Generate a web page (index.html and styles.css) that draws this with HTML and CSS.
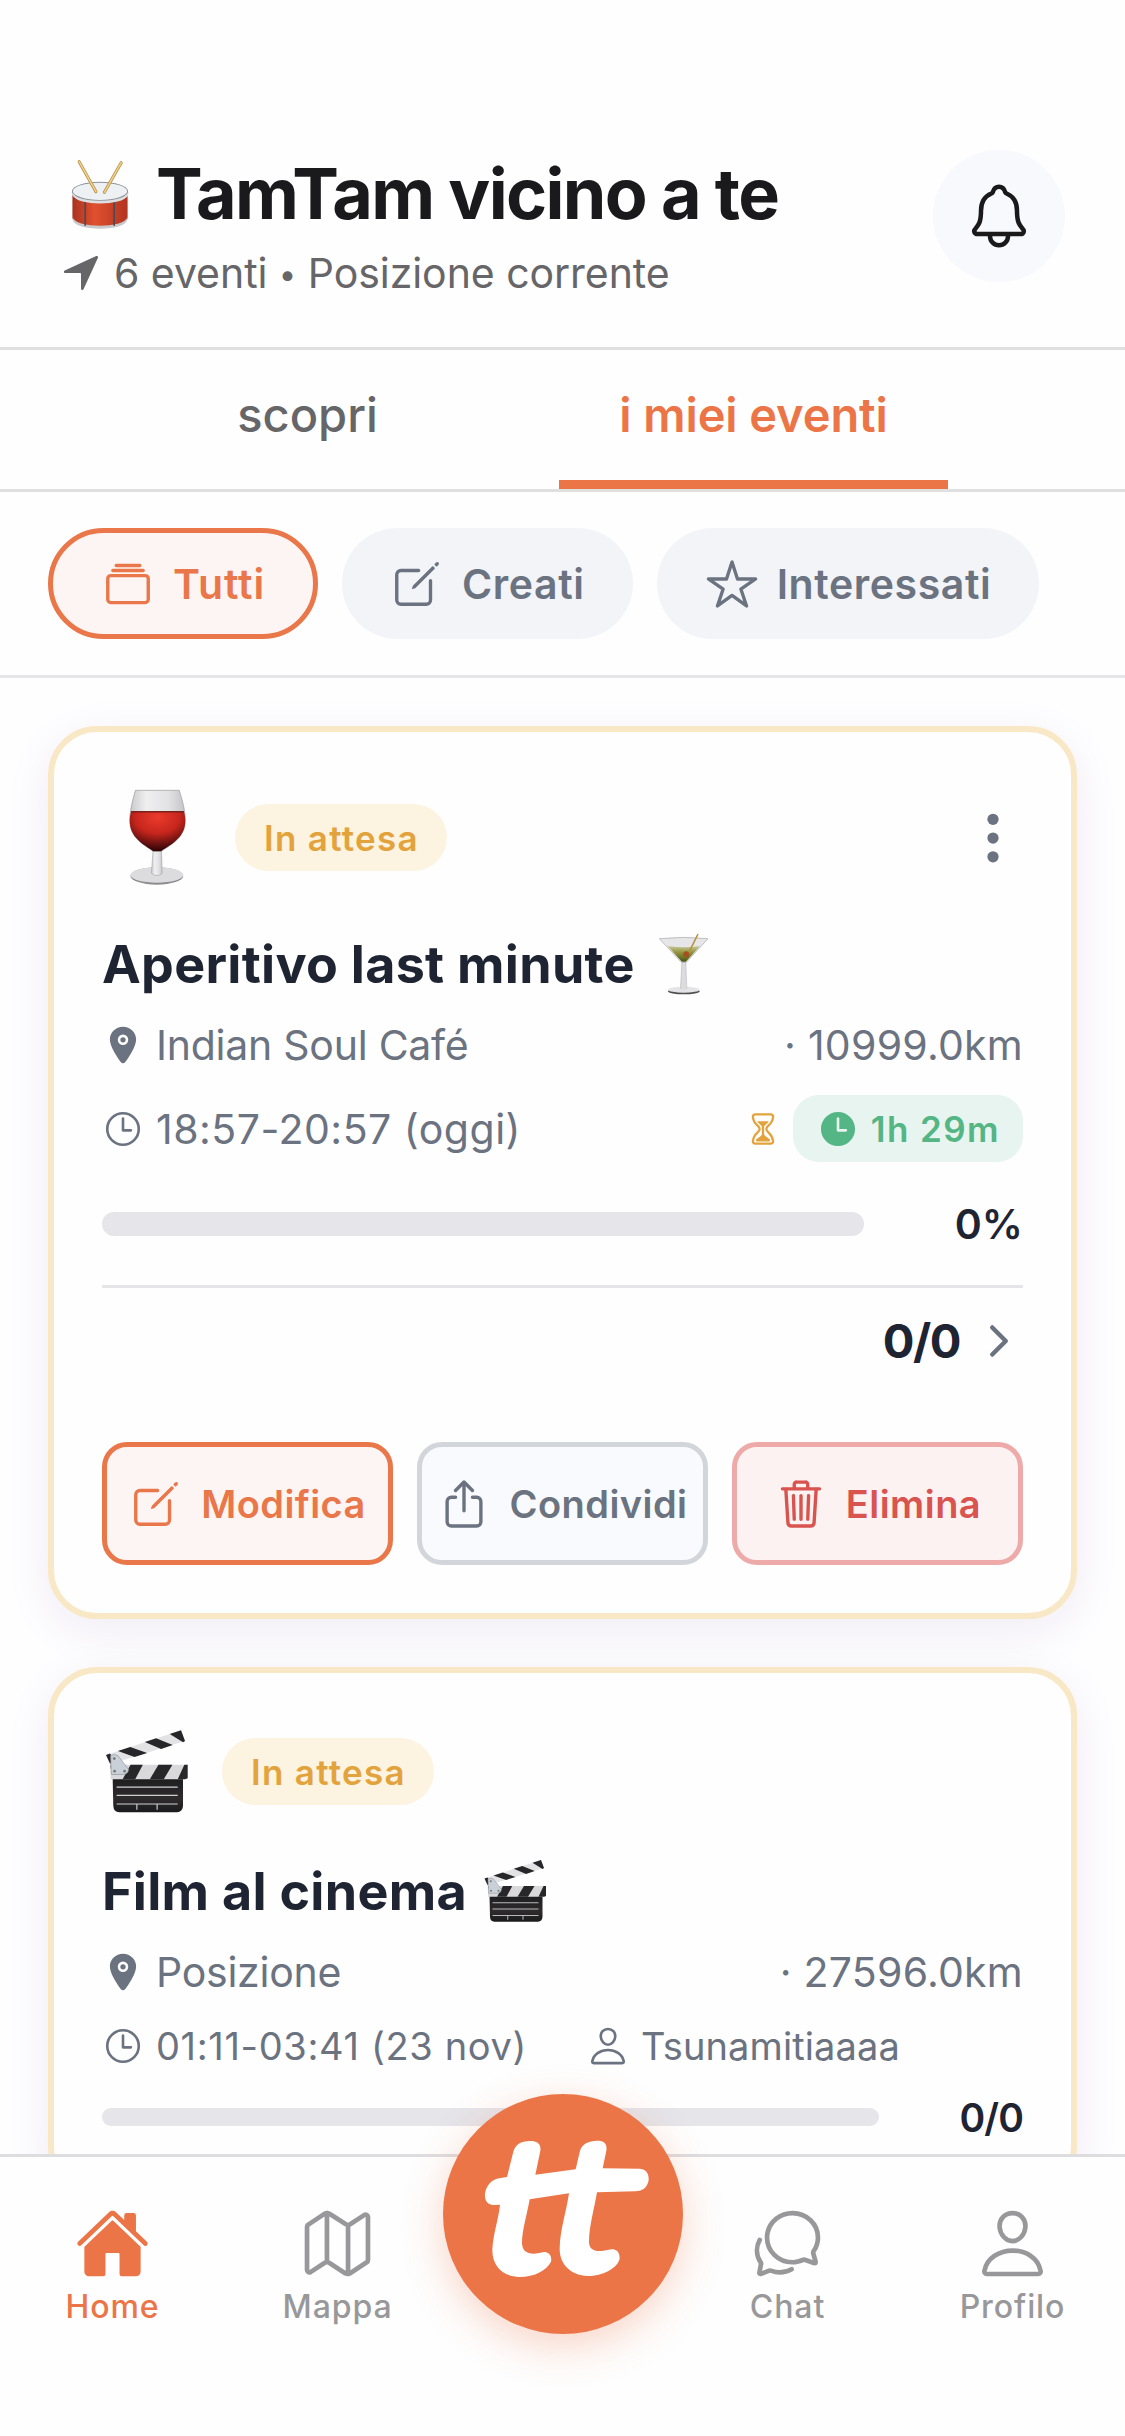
FILE: index.html
```html
<!DOCTYPE html>
<html lang="it">
<head>
<meta charset="utf-8">
<title>TamTam</title>
<link rel="stylesheet" href="styles.css">
</head>
<body>
<svg class="defs" aria-hidden="true">
  <symbol id="create" viewBox="0 0 512 512">
    <path class="line" d="M384 224v184a40 40 0 01-40 40H104a40 40 0 01-40-40V168a40 40 0 0140-40h167.48"/>
    <path d="M459.94 53.25a16.06 16.06 0 00-23.22-.56L424.35 65a8 8 0 000 11.31l11.34 11.32a8 8 0 0011.34 0l12.06-12c6.1-6.09 6.67-16.01.85-22.38zM399.34 90L218.82 270.2a9 9 0 00-2.31 3.93L208.16 299a3.91 3.91 0 004.86 4.86l24.85-8.35a9 9 0 003.93-2.31L422 112.66a9 9 0 000-12.66l-9.95-10a9 9 0 00-12.71 0z"/>
  </symbol>
  <symbol id="location" viewBox="0 0 512 512">
    <circle cx="256" cy="192" r="32"/>
    <path d="M256 32c-88.22 0-160 68.65-160 153 0 40.17 18.31 93.59 54.42 158.78 29 52.34 62.55 99.67 80 123.22a31.75 31.75 0 0051.22 0c17.42-23.55 51-70.88 80-123.22C397.69 278.61 416 225.19 416 185c0-84.35-71.78-153-160-153zm0 224a64 64 0 1164-64 64.07 64.07 0 01-64 64z"/>
  </symbol>
  <symbol id="clock" viewBox="0 0 512 512">
    <circle class="line" cx="256" cy="256" r="192"/>
    <path class="line" d="M256 128v144h96"/>
  </symbol>
  <symbol id="person" viewBox="0 0 512 512">
    <path class="line" d="M344 144c-3.92 52.87-44 96-88 96s-84.15-43.12-88-96c-4-55 35-96 88-96s92 42 88 96z"/>
    <path class="line" d="M256 304c-87 0-175.3 48-191.64 138.6C62.39 453.52 68.57 464 80 464h352c11.44 0 17.62-10.48 15.65-21.4C431.3 352 343 304 256 304z"/>
  </symbol>
  <linearGradient id="slate" x1="0" y1="0" x2="0" y2="1"><stop offset="0" stop-color="#1c1c1e"/><stop offset=".6" stop-color="#2e2b2c"/><stop offset="1" stop-color="#1a1a1c"/></linearGradient>
  <linearGradient id="drumBody"><stop offset="0" stop-color="#a93220"/><stop offset=".4" stop-color="#e0502f"/><stop offset="1" stop-color="#b23420"/></linearGradient>
  <radialGradient id="wine" cx=".5" cy=".15" r=".8"><stop offset="0" stop-color="#ea3b2c"/><stop offset=".5" stop-color="#c7261d"/><stop offset="1" stop-color="#3a0709"/></radialGradient>
  <linearGradient id="glass"><stop offset="0" stop-color="#c9c8ca"/><stop offset=".3" stop-color="#efeff0"/><stop offset=".7" stop-color="#e2e2e4"/><stop offset="1" stop-color="#c4c3c6"/></linearGradient>
  <linearGradient id="martini" x1="0" y1="0" x2="0" y2="1"><stop offset="0" stop-color="#c9c99a"/><stop offset=".4" stop-color="#94953f"/><stop offset="1" stop-color="#4a5312"/></linearGradient>
  <symbol id="clapper" viewBox="45 30 250 256">
    <path d="M68 174H280V262Q278 280 262 281H88Q71 280 70 262Z" fill="url(#slate)"/>
    <path d="M62 138H294V176Q292 181 286 181H62Z" fill="#d9d9db"/>
    <path d="M62 138H72L62 150ZM122 138H159L136 181H98ZM206 138H248L222 181H180ZM284 138H294V178L286 181H264Z" fill="#27272a"/>
    <path d="M48 108L274 34L286 66L60 136Z" fill="#e3e3e5"/>
    <path d="M84 96L121 84L172 102L134 114ZM165 69L199 58L249 78L214 90ZM240 45L274 34L286 66L280 70ZM48 108L60 104L78 130L60 134Z" fill="#27272a"/>
    <path d="M62 110Q72 104 84 110L116 152Q114 166 100 167H64Z" fill="#c9d0d8" stroke="#8f959c" stroke-width="2"/>
    <circle cx="73" cy="119" r="4" fill="#777"/><circle cx="74" cy="157" r="4" fill="#777"/><circle cx="104" cy="157" r="4" fill="#777"/>
    <path d="M80 205H264M80 230H264M80 256H264M141 256V273M202 256V273" fill="none" stroke="#cfcfd1" stroke-width="3.5"/>
  </symbol>
</svg>
<div class="app">
  <header class="header">
    <div class="heading">
      <h1 class="title">
        <svg class="drum" viewBox="62 52 172 208">
          <path d="M66 152V228C72 248 110 256 148 256S224 248 230 228V152Z" fill="url(#drumBody)"/>
          <path d="M66 224C72 242 110 250 148 250S224 242 230 224V232C224 252 190 259 148 259S72 252 66 232Z" fill="#c9c9cc"/>
          <path d="M104 170V250M190 170V250" stroke="#4b4b50" stroke-width="5"/>
          <ellipse cx="148" cy="152" rx="84" ry="29" fill="#c5cacf"/>
          <ellipse cx="148" cy="148" rx="82" ry="27" fill="#eef1f4" stroke="#8d9196" stroke-width="3"/>
          <path d="M66 152V160C76 178 110 184 148 184S222 178 232 160V152C220 170 190 176 148 176S76 170 66 152Z" fill="#dddfe2"/>
          <path d="M86 60L136 149M211 63L161 151" stroke="#b98a3e" stroke-width="9" stroke-linecap="round"/>
          <path d="M86 60L136 149M211 63L161 151" stroke="#ecd08c" stroke-width="5" stroke-linecap="round"/>
        </svg>
        <span class="t">TamTam vicino a te</span>
      </h1>
      <p class="subtitle">
        <svg class="i42" viewBox="0 0 512 512"><path d="M272 464a16 16 0 01-16-16.42V264.13a8 8 0 00-8-8H64.41a16.31 16.31 0 01-15.49-10.65 16 16 0 018.41-19.87l384-176.15a16 16 0 0121.22 21.19l-176 384A16 16 0 01272 464z"/></svg>
        <span class="t">6 eventi <span class="dot">•</span> Posizione corrente</span>
      </p>
    </div>
    <button class="bell">
      <svg class="i72" viewBox="0 0 512 512"><path class="line" d="M427.68 351.43C402 320 383.87 304 383.87 217.35 383.87 138 343.35 109.73 310 96c-4.43-1.82-8.6-6-9.95-10.55C294.2 65.54 277.8 48 256 48s-38.21 17.55-44 37.47c-1.35 4.6-5.52 8.71-9.95 10.53-33.39 13.75-73.87 41.92-73.87 121.35C128.13 304 110 320 84.32 351.43 73.68 364.45 83 384 101.61 384h308.88c18.51 0 27.77-19.61 17.19-32.57zM320 384v16a64 64 0 01-128 0v-16"/></svg>
    </button>
  </header>

  <nav class="tabs">
    <a class="tab"><span class="t">scopri</span></a>
    <a class="tab active"><span class="t">i miei eventi</span></a>
  </nav>

  <div class="filters">
    <button class="chip selected">
      <svg class="i54" viewBox="0 0 512 512"><rect class="line" x="64" y="176" width="384" height="256" rx="28.87"/><path class="line" d="M144 80h224M112 128h288"/></svg>
      <span class="t">Tutti</span>
    </button>
    <button class="chip">
      <svg class="i54"><use href="#create"/></svg>
      <span class="t">Creati</span>
    </button>
    <button class="chip">
      <svg class="i54" viewBox="0 0 512 512"><path class="line" d="M480 208H308L256 48l-52 160H32l140 96-54 160 138-100 138 100-54-160z"/></svg>
      <span class="t">Interessati</span>
    </button>
  </div>

  <main class="list">
    <article class="card">
      <div class="card-head tall">
        <svg class="wine" viewBox="88 60 170 290">
          <ellipse cx="171" cy="320" rx="79" ry="26" fill="#8d8b8e"/>
          <ellipse cx="171" cy="317" rx="79" ry="23" fill="#dcdbdd"/>
          <path d="M160 240H185L187 312Q172 326 155 312Z" fill="url(#glass)" stroke="#99979a" stroke-width="1.5"/>
          <path d="M107 64H238C248 96 256 125 256 155C256 205 215 225 184 246H160C130 225 90 205 90 155C90 125 98 96 107 64Z" fill="url(#glass)" stroke="#99979a" stroke-width="2"/>
          <path d="M94 127H252C255 138 256 146 256 155C256 205 215 225 184 246H160C130 225 90 205 90 155C90 146 91 138 94 127Z" fill="url(#wine)"/>
          <path d="M94 128H252" stroke="#7a211d" stroke-width="4"/>
        </svg>
        <span class="badge"><span class="t">In attesa</span></span>
        <svg class="i60 more" viewBox="0 0 512 512"><circle cx="256" cy="96" r="48"/><circle cx="256" cy="256" r="48"/><circle cx="256" cy="416" r="48"/></svg>
      </div>
      <h2 class="name">
        <span class="t">Aperitivo last minute</span>
        <svg class="cocktail" viewBox="56 40 148 184">
          <ellipse cx="131" cy="213" rx="48" ry="9" fill="#4f4f52"/>
          <ellipse cx="131" cy="208" rx="47" ry="9" fill="#e4e4e6"/>
          <path d="M125 124H137L139 206Q131 212 121 206Z" fill="#dcdcdf"/>
          <path d="M125 126L121 204M137 126L140 204" fill="none" stroke="#aaaaad" stroke-width="1.5"/>
          <path d="M57 54Q131 46 204 54L138 126H124Z" fill="#e6e6e8" stroke="#a9a9ac" stroke-width="2"/>
          <path d="M82 76Q131 84 180 76L137 124H125Z" fill="url(#martini)"/>
          <path d="M173 42L144 100" stroke="#b7913c" stroke-width="4.5" stroke-linecap="round"/>
          <circle cx="138" cy="101" r="9" fill="#a3521f"/>
        </svg>
      </h2>
      <div class="row place">
        <svg class="i42"><use href="#location"/></svg>
        <span class="t">Indian Soul Café</span>
        <span class="t km">· 10999.0km</span>
      </div>
      <div class="row when">
        <svg class="i42"><use href="#clock"/></svg>
        <span class="t">18:57-20:57 (oggi)</span>
        <svg class="hourglass" viewBox="0 0 512 512"><path class="line" d="M145.61 464h220.78c19.8 0 35.55-16.29 33.42-35.06C386.06 308 304 310 304 256s83.11-51 95.8-172.94c2-18.78-13.61-35.06-33.41-35.06H145.61c-19.8 0-35.37 16.28-33.41 35.06C124.89 205 208 201 208 256s-82.06 52-95.8 172.94c-2.14 18.77 13.61 35.06 33.41 35.06z"/><path d="M343.3 432H169.13c-15.6 0-20-18-9.06-29.16C186.55 376 240 356.78 240 326V224c0-19.85-38-35-61.51-67.2-3.88-5.31-3.49-12.8 6.37-12.8h142.73c8.41 0 10.23 7.43 6.4 12.75C310.82 189 272 204.05 272 224v102c0 30.53 55.71 47 80.4 76.87 9.95 12.04 6.47 29.13-9.1 29.13z"/></svg>
        <span class="remaining">
          <svg class="i42" viewBox="0 0 512 512"><path d="M256 48C141.13 48 48 141.13 48 256s93.13 208 208 208 208-93.13 208-208S370.87 48 256 48zm96 240h-96a16 16 0 01-16-16V128a16 16 0 0132 0v128h80a16 16 0 010 32z"/></svg>
          <span class="t">1h 29m</span>
        </span>
      </div>
      <div class="progress">
        <div class="bar"></div>
        <span class="t">0%</span>
      </div>
      <div class="people">
        <span class="t">0/0</span>
        <svg class="i48" viewBox="0 0 512 512"><path class="line thick" d="M184 112l144 144-144 144"/></svg>
      </div>
      <div class="actions">
        <button class="action edit">
          <svg class="i54"><use href="#create"/></svg>
          <span class="t">Modifica</span>
        </button>
        <button class="action share">
          <svg class="i54" viewBox="0 0 512 512"><path class="line" d="M336 192h40a40 40 0 0140 40v192a40 40 0 01-40 40H136a40 40 0 01-40-40V232a40 40 0 0140-40h40M336 128l-80-80-80 80M256 321V48"/></svg>
          <span class="t">Condividi</span>
        </button>
        <button class="action delete">
          <svg class="i54" viewBox="0 0 512 512"><path class="line" d="M112 112l20 320c.95 18.49 14.4 32 32 32h184c17.67 0 30.87-13.51 32-32l20-320M80 112h352M192 112V72h0a23.93 23.93 0 0124-24h80a23.93 23.93 0 0124 24h0v40M256 176v224M184 176l8 224M328 176l-8 224"/></svg>
          <span class="t">Elimina</span>
        </button>
      </div>
    </article>

    <article class="card">
      <div class="card-head">
        <svg class="clapper"><use href="#clapper"/></svg>
        <span class="badge"><span class="t">In attesa</span></span>
      </div>
      <h2 class="name">
        <span class="t">Film al cinema</span>
        <svg class="clapper-sm"><use href="#clapper"/></svg>
      </h2>
      <div class="row place">
        <svg class="i42"><use href="#location"/></svg>
        <span class="t">Posizione</span>
        <span class="t km">· 27596.0km</span>
      </div>
      <div class="row meta">
        <svg class="i42"><use href="#clock"/></svg>
        <span class="t">01:11-03:41 (23 nov)</span>
        <svg class="i42 author"><use href="#person"/></svg>
        <span class="t author-name">Tsunamitiaaaa</span>
      </div>
      <div class="progress slim">
        <div class="bar"></div>
        <span class="t">0/0</span>
      </div>
    </article>
  </main>

  <nav class="bottom">
    <a class="item current">
      <svg class="i75" viewBox="0 0 512 512"><path d="M261.56 101.28a8 8 0 00-11.06 0L66.4 277.15a8 8 0 00-2.47 5.79L63.9 448a32 32 0 0032 32H192a16 16 0 0016-16V328a8 8 0 018-8h80a8 8 0 018 8v136a16 16 0 0016 16h96.06a32 32 0 0032-32V282.94a8 8 0 00-2.47-5.79z"/><path d="M490.91 244.15l-74.8-71.56V64a16 16 0 00-16-16h-48a16 16 0 00-16 16v32l-57.92-55.38C272.77 35.14 264.71 32 256 32c-8.68 0-16.72 3.14-22.14 8.63l-212.7 203.5c-6.22 6-7 15.87-1.34 22.37A16 16 0 0043 267.56L250.5 69.28a8 8 0 0111.06 0l207.52 198.28a16 16 0 0022.59-.44c6.14-6.36 5.63-16.86-.76-22.97z"/></svg>
      <span class="t">Home</span>
    </a>
    <a class="item">
      <svg class="i75" viewBox="0 0 512 512"><path class="line" d="M313.27 124.64L198.73 51.36a32 32 0 00-29.28.35L56.51 127.49A16 16 0 0048 141.63v295.8a16 16 0 0023.49 14.14l97.82-63.79a32 32 0 0129.5-.24l111.86 73a32 32 0 0029.27-.11l115.43-75.94a16 16 0 008.63-14.2V74.57a16 16 0 00-23.49-14.14l-98 63.86a32 32 0 01-29.24.35zM328 128v336M184 48v336"/></svg>
      <span class="t">Mappa</span>
    </a>
    <button class="fab">
      <svg viewBox="39 42 720 720"><path d="M250 215C256 195 272 183 300 183C322 183 334 192 331 212L316 284L437 268L450 212C456 192 475 182 502 182C524 182 532 192 529 212L518 265L628 266C650 267 657 282 656 300C653 320 640 334 615 334L501 337C494 380 477 440 477 485C477 505 490 515 515 513C530 511 540 507 550 508C565 511 571 524 568 540C558 566 520 588 472 588C425 586 388 555 389 505C390 450 408 400 417 340L299 358C290 410 276 450 276 490C277 510 287 521 312 521C328 520 335 516 346 516C360 519 366 530 363 545C350 570 315 591 268 591C220 590 186 560 187 508C190 460 206 415 210 374L190 375C170 374 163 358 165 340C170 312 188 297 212 294L231 291Z"/></svg>
    </button>
    <a class="item">
      <svg class="i75" viewBox="0 0 512 512"><path class="line" d="M431 320.6c-1-3.6 1.2-8.6 3.3-12.2a33.68 33.68 0 012.1-3.1A162 162 0 00464 215c.3-92.2-77.5-167-173.7-167-83.9 0-153.9 57.1-170.3 132.9a160.7 160.7 0 00-3.7 34.2c0 92.3 74.8 169.1 171 169.1 15.3 0 35.9-4.6 47.2-7.7s22.5-7.2 25.4-8.3a26.44 26.44 0 019.3-1.7 26 26 0 0110.1 2l56.7 20.1a13.52 13.52 0 003.9 1 8 8 0 008-8 12.85 12.85 0 00-.5-2.7z"/><path class="line" d="M66.46 232a146.23 146.23 0 006.39 152.67c2.31 3.49 3.61 6.19 3.21 8s-11.93 61.87-11.93 61.87a8 8 0 002.71 7.68A8.17 8.17 0 0072 464a7.26 7.26 0 002.91-.6l56.21-22a15.7 15.7 0 0112 .2c18.94 7.38 39.88 12 60.83 12A159.21 159.21 0 00284 432.11"/></svg>
      <span class="t">Chat</span>
    </a>
    <a class="item">
      <svg class="i75"><use href="#person"/></svg>
      <span class="t">Profilo</span>
    </a>
  </nav>
</div>
</body>
</html>
```
FILE: styles.css
```css
* { box-sizing: border-box; margin: 0; }
body { font-family: Inter, "Liberation Sans", sans-serif; background: #fefefe; color: #1c1c1e; }
button { font: inherit; border: 0; padding: 0; background: none; color: inherit; }
svg { display: block; flex: none; fill: currentColor; }
.defs { position: absolute; width: 0; height: 0; }
.line { fill: none; stroke: currentColor; stroke-width: 32; stroke-linecap: round; stroke-linejoin: round; }
.thick { stroke-width: 48; }
.t { white-space: nowrap; }
.i42 { width: 42px; height: 42px; }
.i48 { width: 48px; height: 48px; }
.i54 { width: 54px; height: 54px; }
.i60 { width: 60px; height: 60px; }
.i72 { width: 72px; height: 72px; }
.i75 { width: 75px; height: 75px; }

.app { display: flex; flex-direction: column; width: 1125px; height: 2436px; overflow: hidden; }

.header { display: flex; justify-content: space-between; align-items: flex-start; height: 350px; padding: 150px 60px 0; border-bottom: 3px solid #dfdfdf; flex: none; }
.title { display: flex; align-items: center; height: 87px; font-size: 70px; font-weight: 700; letter-spacing: -1.65px; color: #1a191c; }
.drum { width: 58px; height: 70px; margin: 0 27px 0 11px; }
.subtitle { display: flex; align-items: center; gap: 12px; height: 50px; margin-top: 11px; font-size: 41px; letter-spacing: -.05px; color: #666568; }
.dot { font-size: 31px; vertical-align: 3px; }
.bell { display: flex; align-items: center; justify-content: center; width: 132px; height: 132px; border-radius: 50%; background: #f8f9fd; color: #1a191c; }

.tabs { display: flex; gap: 57px; height: 142px; padding-left: 113px; border-bottom: 3px solid #e0e0e0; flex: none; }
.tab { display: flex; align-items: center; justify-content: center; width: 389px; padding-bottom: 2px; border-bottom: 9px solid transparent; font-size: 47px; font-weight: 500; color: #666568; }
.tab.active { border-color: #ec7547; color: #ec7547; font-weight: 600; letter-spacing: -.1px; }

.filters { display: flex; gap: 24px; height: 186px; padding: 36px 48px; border-bottom: 3px solid #e5e5e7; flex: none; }
.chip { display: flex; align-items: center; gap: 18px; height: 111px; padding: 0 48px; border-radius: 56px; background: #f2f4f8; color: #6b7280; font-size: 41px; font-weight: 600; letter-spacing: .6px; }
.chip.selected { border: 5px solid #e9774a; background: #fdf5f3; color: #e9774a; letter-spacing: .9px; }

.list { flex: 1; min-height: 0; overflow: hidden; padding: 48px 48px 0; background: #fefdff; display: flex; flex-direction: column; gap: 48px; }
.card { flex: none; padding: 42px 48px 48px; border: 6px solid #f9e8c6; border-radius: 49px; background: #fefefe; box-shadow: 0 12px 48px rgba(50, 35, 80, .07); }
.card-head { display: flex; align-items: center; height: 113px; }
.card-head.tall { height: 127px; }
.wine { width: 57px; height: 97px; margin: 0 49px 0 27px; }
.clapper { width: 83px; height: 85px; margin: 0 34px 0 3px; }
.badge { display: flex; align-items: center; height: 67px; padding: 0 28px 0 29px; border-radius: 34px; background: #fdf3e1; color: #e3a33c; font-size: 35px; font-weight: 600; letter-spacing: 1.3px; }
.more { margin-left: auto; color: #6b7280; }
.name { display: flex; align-items: center; height: 66px; margin-top: 30px; font-size: 52px; font-weight: 700; letter-spacing: .3px; color: #1f2433; }
.cocktail { width: 49px; height: 61px; margin-left: 24px; }
.clapper-sm { width: 64px; height: 64px; margin-left: 16px; }
.row { display: flex; align-items: center; gap: 12px; height: 48px; font-size: 41px; color: #6b7280; }
.place { margin-top: 24px; letter-spacing: -.25px; }
.km { margin-left: auto; letter-spacing: .25px; }
.when { height: 67px; margin-top: 26px; letter-spacing: .5px; }
.hourglass { width: 36px; height: 36px; margin-left: auto; color: #e3a33c; }
.remaining { display: flex; align-items: center; gap: 12px; height: 67px; padding: 0 23px 0 24px; border-radius: 26px; background: #e7f4f0; color: #54b585; font-size: 35px; font-weight: 600; letter-spacing: 1.4px; }
.meta { margin-top: 26px; font-size: 38px; letter-spacing: .65px; }
.author { margin-left: 48px; }
.author-name { letter-spacing: .1px; }
.progress { display: flex; align-items: center; justify-content: space-between; height: 48px; margin-top: 38px; font-size: 41px; font-weight: 600; color: #1f2433; }
.bar { width: 762px; height: 24px; border-radius: 12px; background: #e5e5ea; }
.slim { margin-top: 23px; font-size: 39px; letter-spacing: -.9px; }
.slim .bar { width: 777px; height: 18px; border-radius: 9px; }
.people { display: flex; align-items: center; justify-content: flex-end; gap: 15px; height: 108px; margin-top: 37px; border-top: 3px solid #e5e5e7; font-size: 47px; font-weight: 700; letter-spacing: -1.5px; color: #1f2433; }
.people svg { color: #6b7280; }
.actions { display: grid; grid-template-columns: repeat(3, 1fr); gap: 24px; margin-top: 49px; }
.action { display: flex; align-items: center; justify-content: center; gap: 18px; height: 123px; border: 5px solid; border-radius: 25px; font-size: 38px; font-weight: 600; letter-spacing: .45px; }
.edit { background: #fdf5f3; border-color: #e9774a; color: #e9774a; }
.share { background: #f9fafe; border-color: #d2d5da; color: #6b7280; }
.delete { background: #fcf2f2; border-color: #eea9a9; color: #d9534f; }

.bottom { display: grid; position: relative; grid-template-columns: repeat(5, minmax(0, 1fr)); height: 282px; flex: none; border-top: 3px solid #dddde0; background: #fefefe; color: #98989a; }
.item { display: flex; flex-direction: column; align-items: center; padding-top: 49px; font-size: 32px; line-height: 40px; font-weight: 500; letter-spacing: .9px; }
.item svg { margin-bottom: 6px; }
.current { color: #ec7547; }
.fab { justify-self: center; width: 240px; height: 240px; margin-top: -63px; border-radius: 50%; background: #ec7547; color: #fff; box-shadow: 0 12px 42px rgba(236, 117, 71, .3); }
```
